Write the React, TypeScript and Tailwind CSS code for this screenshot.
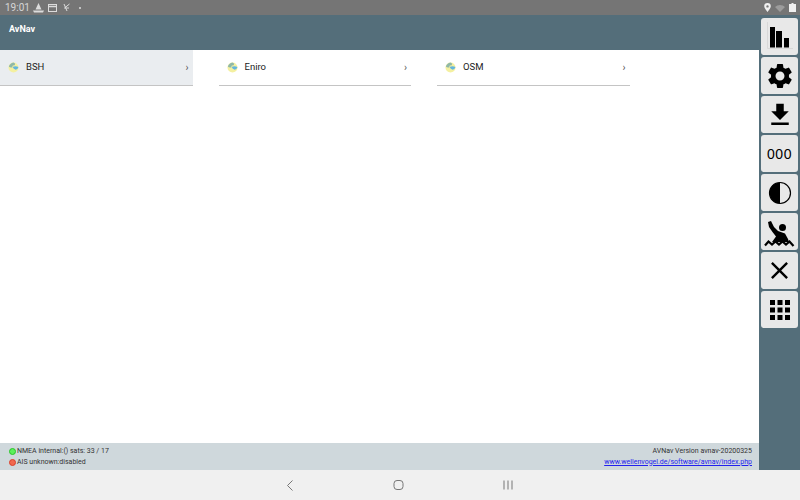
import {FC, ReactNode} from 'react';
import {MdApps, MdClose, MdFileDownload, MdSettings} from 'react-icons/md';

const charts = ['BSH', 'Eniro', 'OSM'];

const ChartIcon: FC = () => (
  <svg width="11" height="11" viewBox="0 0 12 12">
    <circle cx="6" cy="6" r="5.5" fill="#f4f0a0" />
    <path d="M1 5 Q2 1.5 6 .6 Q8.5 1.5 7.5 3.5 Q4.5 3 4.5 6 Q2 6.5 1 5Z" fill="#8fb8a8" />
    <path d="M5 5.5 Q8 3.8 11.4 5.5 Q11 8 8.5 8.5 Q6 8 5 5.5Z" fill="#62b6e0" />
  </svg>
);

const ToolButton: FC<{children: ReactNode}> = ({children}) => (
  <button
    type="button"
    className="flex h-[37px] w-[37px] items-center justify-center rounded-[3px] bg-[#e8e8e8] text-black">
    {children}
  </button>
);

const App: FC = () => {
  return (
    <div className="flex h-[500px] w-[800px] flex-col overflow-hidden bg-white font-['Roboto',sans-serif]">
      <div className="flex h-[15px] shrink-0 items-center justify-between bg-[#757575] pl-[5px] pr-[4px] text-[#d6d6d6]">
        <div className="flex items-center">
          <span className="w-[28px] text-[10px] leading-none">19:01</span>
          <svg width="11" height="10" viewBox="0 0 11 10" fill="#dcdcdc">
            <path d="M5.5 0 L8.5 6.5 H2.5Z M0 7.5 H11 L10 9.5 H1Z" />
          </svg>
          <svg className="ml-[4px]" width="9" height="8" viewBox="0 0 9 8" fill="none" stroke="#dcdcdc">
            <rect x=".5" y=".5" width="8" height="7" />
            <path d="M.5 2.5 H8.5" strokeWidth="1.5" />
          </svg>
          <svg className="ml-[6px]" width="8" height="9" viewBox="0 0 8 9" fill="none" stroke="#dcdcdc">
            <path d="M1 1 L4 8 M6.5 1 L1.5 5 H6" />
          </svg>
          <span className="ml-[8px] h-[2px] w-[2px] rounded-full bg-[#dcdcdc]" />
        </div>
        <div className="flex items-center">
          <svg width="7" height="9" viewBox="0 0 7 9" fill="#f0f0f0">
            <path
              fillRule="evenodd"
              d="M3.5 0 A3.3 3.3 0 0 1 6.8 3.3 C6.8 5 4.5 7.5 3.5 9 C2.5 7.5 .2 5 .2 3.3 A3.3 3.3 0 0 1 3.5 0Z M3.5 2.2 A1.2 1.2 0 1 0 3.5 4.6 A1.2 1.2 0 1 0 3.5 2.2Z"
            />
          </svg>
          <svg className="ml-[4px]" width="10" height="8" viewBox="0 0 10 8" fill="#9c9c9c">
            <path d="M0 3 A7 7 0 0 1 10 3 L5 8Z" />
          </svg>
          <svg className="ml-[4px]" width="7" height="9" viewBox="0 0 7 9" fill="#f0f0f0">
            <path d="M2.5 0 H4.5 V1 H7 V9 H0 V1 H2.5Z" />
          </svg>
        </div>
      </div>

      <div className="flex min-h-0 flex-1">
        <div className="flex min-w-0 flex-1 flex-col">
          <div className="h-[35px] shrink-0 bg-[#546e7a] pl-[9px] pt-[8px] text-[9px] leading-[12px] font-bold text-white">
            AvNav
          </div>
          <div className="flex flex-1 items-start gap-[26px]">
            {charts.map((name, i) => (
              <div
                key={name}
                className={
                  i === 0
                    ? 'flex h-[36px] w-[192.5px] items-center border-b border-[#c4c4c4] bg-[#eaedf0] pb-px pl-[8px] pr-[4px]'
                    : 'flex h-[36px] w-[192.5px] items-center border-b border-[#c4c4c4] pb-px pl-[8px] pr-[4px]'
                }>
                <ChartIcon />
                <span className="ml-[7px] flex-1 text-[9.5px] text-[#222]">{name}</span>
                <span className="text-[10px] text-[#555]">›</span>
              </div>
            ))}
          </div>
          <div className="flex h-[27px] shrink-0 items-center justify-between bg-[#cfd8dc] pl-[9px] pr-[7px] text-[7px] leading-[11px] text-[#333]">
            <div>
              <div className="flex items-center">
                <span className="mr-px h-[7px] w-[7px] rounded-full border border-[#2bc42b] bg-[#5cf05c]" />
                NMEA internal:() sats: 33 / 17
              </div>
              <div className="flex items-center">
                <span className="mr-px h-[7px] w-[7px] rounded-full border border-[#d9412c] bg-[#f0694f]" />
                AIS unknown:disabled
              </div>
            </div>
            <div className="text-right">
              <div>AVNav Version avnav-20200325</div>
              <div className="text-[#2222ee] underline">www.wellenvogel.de/software/avnav/index.php</div>
            </div>
          </div>
        </div>

        <div className="flex w-[41px] shrink-0 flex-col items-start gap-[2px] bg-[#546e7a] pl-[2px] pt-[3px]">
          <ToolButton>
            <svg width="37" height="37" viewBox="0 0 37 37">
              <path d="M6.5 4 V30.5 H32" fill="none" stroke="#d8d8d8" strokeWidth="1" />
              <path d="M9 9 H14 V29.5 H9Z M15 13 H21 V29.5 H15Z M23 20 H28 V29.5 H23Z" fill="#000" />
            </svg>
          </ToolButton>
          <ToolButton>
            <MdSettings size={30} />
          </ToolButton>
          <ToolButton>
            <MdFileDownload size={30} />
          </ToolButton>
          <ToolButton>
            <span className="pt-px font-['Liberation_Sans',sans-serif] text-[14px] tracking-[0.5px]">000</span>
          </ToolButton>
          <ToolButton>
            <svg width="24" height="24" viewBox="0 0 24 24">
              <circle cx="12" cy="12" r="10.5" fill="none" stroke="#000" strokeWidth="1.2" />
              <path d="M12 1.5 A10.5 10.5 0 0 0 12 22.5Z" fill="#000" />
            </svg>
          </ToolButton>
          <ToolButton>
            <svg width="37" height="37" viewBox="0 0 37 37">
              <circle cx="21.5" cy="14.5" r="3.5" fill="#000" />
              <path d="M7 9 L10 8 L13 14 L17 18 L24 20.5 L27 26 L28 29 L11 29 L15 23.5 L11.5 19 L8 14Z" fill="#000" />
              <path
                d="M4 32.5 L7.5 28.5 L11 31.5 L14.5 28.5 L18 31.5 L21.5 28.5 L25 31.5 L28.5 28.5 L32.5 33"
                fill="none"
                stroke="#000"
                strokeWidth="2.2"
              />
            </svg>
          </ToolButton>
          <ToolButton>
            <MdClose size={29} />
          </ToolButton>
          <ToolButton>
            <MdApps size={30} />
          </ToolButton>
        </div>
      </div>

      <div className="flex h-[30px] shrink-0 items-center justify-center gap-[99px] bg-[#f0f0f0] pr-px">
        <svg width="8" height="11" viewBox="0 0 8 11" fill="none" stroke="#777" strokeWidth="1">
          <path d="M6.5 .5 L1.5 5.5 L6.5 10.5" />
        </svg>
        <svg width="11" height="10" viewBox="0 0 11 10" fill="none" stroke="#777" strokeWidth="1">
          <rect x="1" y=".5" width="9" height="9" rx="3" />
        </svg>
        <svg width="10" height="10" viewBox="0 0 10 10" fill="none" stroke="#777" strokeWidth="1">
          <path d="M1 .5 V9.5 M5 .5 V9.5 M9 .5 V9.5" />
        </svg>
      </div>
    </div>
  );
};

export default App;
